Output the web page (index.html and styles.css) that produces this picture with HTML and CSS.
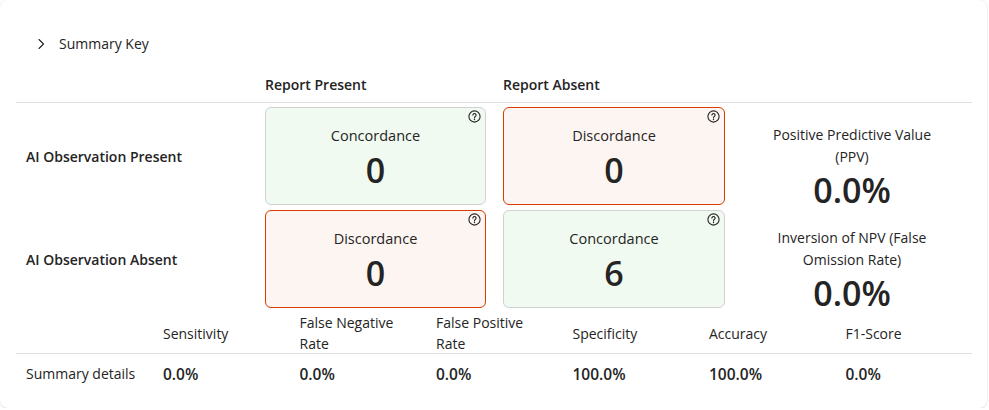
FILE: index.html
```html
<!DOCTYPE html>
<html lang="en">
<head>
<meta charset="utf-8">
<title>Summary</title>
<link rel="stylesheet" href="styles.css">
</head>
<body>
<div class="panel">
  <div class="summary-key">
    <svg class="chevron" width="12" height="12" viewBox="0 0 12 12"><path d="M4 1.5 L8.5 6 L4 10.5" fill="none" stroke="#242424" stroke-width="1.1" stroke-linecap="round" stroke-linejoin="round"/></svg>
    <span>Summary Key</span>
  </div>

  <div class="matrix-head">
    <div></div>
    <div class="col-title">Report Present</div>
    <div class="col-title">Report Absent</div>
    <div></div>
  </div>

  <div class="matrix">
    <div class="row-label">AI Observation Present</div>
    <div class="cell good">
      <svg class="help" width="13" height="13" viewBox="0 0 13 13"><circle cx="6.5" cy="6.5" r="5.6" fill="none" stroke="#242424" stroke-width="1.1"/><path d="M4.9 5.1 a1.6 1.6 0 1 1 2.4 1.4 c-0.5 0.3 -0.8 0.6 -0.8 1.2 v0.2" fill="none" stroke="#242424" stroke-width="1.1" stroke-linecap="round"/><circle cx="6.5" cy="9.5" r="0.7" fill="#242424"/></svg>
      <div class="cell-title">Concordance</div>
      <div class="cell-num">0</div>
    </div>
    <div class="cell bad">
      <svg class="help" width="13" height="13" viewBox="0 0 13 13"><circle cx="6.5" cy="6.5" r="5.6" fill="none" stroke="#242424" stroke-width="1.1"/><path d="M4.9 5.1 a1.6 1.6 0 1 1 2.4 1.4 c-0.5 0.3 -0.8 0.6 -0.8 1.2 v0.2" fill="none" stroke="#242424" stroke-width="1.1" stroke-linecap="round"/><circle cx="6.5" cy="9.5" r="0.7" fill="#242424"/></svg>
      <div class="cell-title">Discordance</div>
      <div class="cell-num">0</div>
    </div>
    <div class="stat">
      <div class="stat-title">Positive Predictive Value (PPV)</div>
      <div class="stat-num">0.0%</div>
    </div>

    <div class="row-label">AI Observation Absent</div>
    <div class="cell bad">
      <svg class="help" width="13" height="13" viewBox="0 0 13 13"><circle cx="6.5" cy="6.5" r="5.6" fill="none" stroke="#242424" stroke-width="1.1"/><path d="M4.9 5.1 a1.6 1.6 0 1 1 2.4 1.4 c-0.5 0.3 -0.8 0.6 -0.8 1.2 v0.2" fill="none" stroke="#242424" stroke-width="1.1" stroke-linecap="round"/><circle cx="6.5" cy="9.5" r="0.7" fill="#242424"/></svg>
      <div class="cell-title">Discordance</div>
      <div class="cell-num">0</div>
    </div>
    <div class="cell good">
      <svg class="help" width="13" height="13" viewBox="0 0 13 13"><circle cx="6.5" cy="6.5" r="5.6" fill="none" stroke="#242424" stroke-width="1.1"/><path d="M4.9 5.1 a1.6 1.6 0 1 1 2.4 1.4 c-0.5 0.3 -0.8 0.6 -0.8 1.2 v0.2" fill="none" stroke="#242424" stroke-width="1.1" stroke-linecap="round"/><circle cx="6.5" cy="9.5" r="0.7" fill="#242424"/></svg>
      <div class="cell-title">Concordance</div>
      <div class="cell-num">6</div>
    </div>
    <div class="stat">
      <div class="stat-title">Inversion of NPV (False Omission Rate)</div>
      <div class="stat-num">0.0%</div>
    </div>
  </div>

  <div class="metrics metrics-head">
    <div></div>
    <div class="m-head">Sensitivity</div>
    <div class="m-head">False Negative Rate</div>
    <div class="m-head">False Positive Rate</div>
    <div class="m-head">Specificity</div>
    <div class="m-head">Accuracy</div>
    <div class="m-head">F1-Score</div>
  </div>
  <div class="metrics metrics-values">
    <div class="m-label">Summary details</div>
    <div class="m-val">0.0%</div>
    <div class="m-val">0.0%</div>
    <div class="m-val">0.0%</div>
    <div class="m-val">100.0%</div>
    <div class="m-val">100.0%</div>
    <div class="m-val">0.0%</div>
  </div>
</div>
</body>
</html>
```
FILE: styles.css
```css
* { box-sizing: border-box; }
html, body { margin: 0; padding: 0; background: #ffffff; }
body {
  font-family: "Open Sans", "Noto Sans", "Liberation Sans", sans-serif;
  color: #242424;
  font-size: 14px;
}
.panel {
  width: 987px;
  height: 408px;
  background: #fff;
  border-radius: 8px;
  box-shadow: 0 0 2px rgba(0,0,0,0.12), 0 1px 2px rgba(0,0,0,0.08);
  padding: 32px 15px 0 16px;
}
.summary-key {
  display: flex;
  align-items: center;
  height: 24px;
  padding-left: 19px;
  gap: 12px;
  line-height: 24px;
}
.chevron { flex: none; }

.matrix-head, .matrix {
  display: grid;
  grid-template-columns: 232px 221px 222px 1fr;
  column-gap: 17px;
}
.matrix-head {
  margin-top: 19px;
  border-bottom: 1px solid #e0e0e0;
}
.col-title {
  font-weight: 600;
  line-height: 20px;
  padding-bottom: 7px;
}
.matrix {
  padding-top: 4px;
  grid-template-rows: 98px 98px;
  row-gap: 5px;
}
.row-label {
  align-self: center;
  padding-left: 10px;
  font-weight: 600;
}
.cell {
  position: relative;
  border-radius: 6px;
  text-align: center;
  padding-top: 18px;
}
.cell.good { background: #f1faf1; border: 1px solid #d1d1d1; }
.cell.bad { background: #fdf5f2; border: 1px solid #da3b01; }
.help { position: absolute; top: 2px; right: 4px; }
.cell-title { line-height: 20px; font-size: 14.5px; }
.cell-num {
  margin-top: 2px;
  font-size: 34px;
  font-weight: 600;
  line-height: 44px;
}
.stat {
  text-align: center;
  padding: 17px 30px 0 20px;
}
.stat-title { line-height: 22px; }
.stat-num {
  font-size: 34px;
  font-weight: 600;
  line-height: 44px;
}

.metrics {
  display: grid;
  grid-template-columns: 147px repeat(5, 136.5px) 1fr;
}
.metrics-head {
  margin-top: 4px;
  height: 42px;
  border-bottom: 1px solid #e0e0e0;
}
.m-head {
  align-self: center;
  line-height: 21px;
  padding-right: 22px;
}
.metrics-values { padding-top: 10px; }
.m-label { padding-left: 10px; line-height: 20px; }
.m-val { font-weight: 600; font-size: 15.5px; line-height: 20px; }
```
